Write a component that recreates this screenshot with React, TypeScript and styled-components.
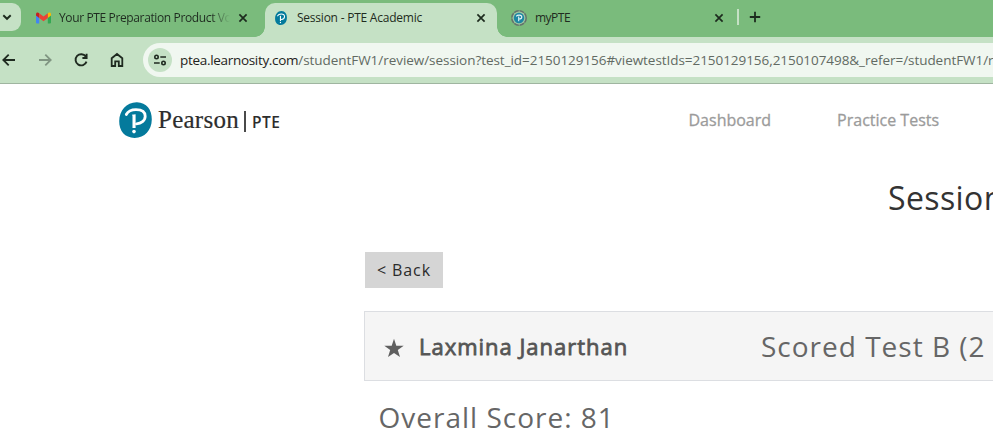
import React from "react";
import styled, { createGlobalStyle } from "styled-components";

const GlobalStyle = createGlobalStyle`
  * { box-sizing: border-box; }
  html, body { margin: 0; padding: 0; overflow: hidden; background: #fff; }
  svg { display: block; flex: none; }
`;

const Screen = styled.div`
  width: 993px;
  height: 446px;
  overflow: hidden;
  background: #fff;
  font-family: "Open Sans", "Noto Sans", sans-serif;
`;

const TabStrip = styled.div`
  display: flex;
  height: 37px;
  background: #7abb7c;
`;

const TabSearch = styled.div`
  display: flex;
  align-items: center;
  width: 21px;
  height: 28px;
  margin-top: 3px;
  padding-left: 2px;
  border-radius: 0 9px 9px 0;
  background: #c5e1c5;
`;

const Tab = styled.div<{ $width: number; $left: number; $right: number; $active?: boolean }>`
  position: relative;
  display: flex;
  align-items: center;
  flex: none;
  width: ${(p) => p.$width}px;
  height: 34px;
  margin-top: 3px;
  padding: 0 ${(p) => p.$right}px 5px ${(p) => p.$left}px;
  border-radius: 10px 10px 0 0;
  background: ${(p) => (p.$active ? "#c5e1c5" : "transparent")};

  &::before,
  &::after {
    content: ${(p) => (p.$active ? '""' : "none")};
    position: absolute;
    bottom: 0;
    width: 10px;
    height: 10px;
  }
  &::before {
    left: -10px;
    background: radial-gradient(circle at 0 0, transparent 9.5px, #c5e1c5 10px);
  }
  &::after {
    right: -10px;
    background: radial-gradient(circle at 100% 0, transparent 9.5px, #c5e1c5 10px);
  }
`;

const TabTitle = styled.span<{ $gap: number; $spacing: number; $fade?: boolean }>`
  flex: 1;
  margin-left: ${(p) => p.$gap}px;
  overflow: hidden;
  white-space: nowrap;
  font-size: 12px;
  line-height: 18px;
  letter-spacing: ${(p) => p.$spacing}px;
  color: #1f2b20;
  mask-image: ${(p) =>
    p.$fade ? "linear-gradient(to right, #000 152px, transparent 171px)" : "none"};
`;

const NewTab = styled.div`
  display: flex;
  align-items: center;
  gap: 10px;
  height: 34px;
`;

const TabDivider = styled.div`
  width: 2px;
  height: 16px;
  background: #c5e1c5;
`;

const Toolbar = styled.div`
  display: flex;
  align-items: center;
  height: 47px;
  border-bottom: 1px solid #9fb5a0;
  background: #c5e1c5;
`;

const NavIcons = styled.div`
  display: flex;
  align-items: center;
  gap: 16px;
  width: 143px;
  flex: none;
  margin-left: -1px;
`;

const AddressBar = styled.div`
  display: flex;
  align-items: center;
  width: 900px;
  flex: none;
  height: 34px;
  padding-left: 5px;
  margin-left: 1px;
  border-radius: 17px;
  background: #f0f7f0;
`;

const SiteInfo = styled.div`
  display: flex;
  align-items: center;
  justify-content: center;
  width: 24px;
  height: 24px;
  border-radius: 50%;
  background: #c5e1c5;
`;

const Url = styled.span`
  margin-left: 8px;
  white-space: nowrap;
  font-size: 13.5px;
  line-height: 20px;
  letter-spacing: -0.05px;
  color: #626a63;
`;

const Host = styled.span`
  letter-spacing: -0.31px;
  color: #1f2320;
`;

const SiteHeader = styled.header`
  display: flex;
  align-items: center;
  height: 72px;
  padding-left: 119px;
`;

const Brand = styled.div`
  display: flex;
  align-items: center;
  width: 569.5px;
  color: #2d2d2d;
`;

const BrandName = styled.span`
  width: 82px;
  margin-left: 6px;
  font-family: "Liberation Serif", serif;
  font-size: 25px;
  line-height: 30px;
  letter-spacing: 0.25px;
  -webkit-text-stroke: 0.2px #2d2d2d;
`;

const BrandRule = styled.div`
  width: 2px;
  height: 21px;
  margin: 2px 6px 0 4px;
  background: #4a4a4a;
`;

const BrandProduct = styled.span`
  padding-top: 3px;
  font-size: 15.5px;
  font-weight: 600;
  line-height: 20px;
  letter-spacing: 0.5px;
`;

const SiteNav = styled.nav`
  display: flex;
  gap: 66px;
`;

const NavLink = styled.a`
  white-space: nowrap;
  font-size: 16px;
  line-height: 22px;
  color: #9b9b9b;
  -webkit-text-stroke: 0.3px #9b9b9b;
`;

const PageTitle = styled.h1`
  margin: 18px 0 0 888px;
  height: 48px;
  white-space: nowrap;
  font-size: 32px;
  font-weight: 400;
  line-height: 48px;
  letter-spacing: 0.4px;
  color: #333;
`;

const Content = styled.main`
  padding: 30px 0 0 364px;
`;

const BackButton = styled.button`
  display: block;
  width: 78px;
  height: 36px;
  margin-left: 1px;
  padding: 0;
  border: 0;
  background: #d5d5d5;
  font-family: inherit;
  font-size: 16px;
  line-height: 36px;
  letter-spacing: 0.9px;
  color: #2b2b2b;
  white-space: nowrap;
`;

const StudentBar = styled.section`
  display: flex;
  align-items: center;
  width: 700px;
  height: 70px;
  margin-top: 23px;
  padding-left: 19px;
  border: 1px solid #dcdee2;
  background: #f5f5f5;
`;

const StarSlot = styled.div`
  padding-top: 4px;
`;

const StudentName = styled.span`
  width: 342px;
  margin-left: 15px;
  font-size: 22px;
  line-height: 32px;
  letter-spacing: 0.98px;
  color: #555;
  -webkit-text-stroke: 0.8px #555;
  white-space: nowrap;
`;

const TestName = styled.span`
  font-size: 28px;
  line-height: 40px;
  letter-spacing: 1px;
  color: #666;
  white-space: nowrap;
`;

const OverallScore = styled.div`
  margin: 16px 0 0 14.5px;
  font-size: 28px;
  line-height: 40px;
  letter-spacing: 1px;
  color: #666;
  white-space: nowrap;
`;

const PearsonMark = ({ width, height }: { width: number; height: number }) => (
  <svg width={width} height={height} viewBox="0 0 33 36" preserveAspectRatio="none">
    <path
      d="M18 .2C27.500 .4 33 7.500 32.800 17.500C32.600 28.500 25.500 36 15.500 35.900C6 35.800 0 29 .2 19C.4 8.500 7.500 0 18 .2Z"
      fill="#047a9c"
    />
    <path
      d="M7.300 12.500C9 9.200 12.500 7.600 17 7.600C22.700 7.600 26.200 10 26.200 14.200C26.200 18.700 22 21.600 17.500 21.900"
      fill="none"
      stroke="#fff"
      strokeWidth="2.800"
      strokeLinecap="round"
    />
    <path d="M12.800 12.700L16.600 12.200V26H13.500V13.800Z" fill="#fff" />
    <circle cx="15" cy="29.600" r="1.800" fill="#fff" />
  </svg>
);

const BadgeMark = () => (
  <svg width="16" height="16" viewBox="0 0 16 16">
    <circle cx="8" cy="8" r="7.200" fill="#9cc7a2" stroke="#65716c" strokeWidth="1.500" strokeDasharray="5 .7" />
    <circle cx="8" cy="8" r="5.200" fill="#1d87a2" />
    <path d="M5.200 6.300C6.500 4.700 10.800 4.600 10.800 7C10.800 8.500 9.300 9 8.200 9M7.700 6.500V11.300" fill="none" stroke="#e8f4f6" strokeWidth="1.100" />
  </svg>
);

const GmailMark = () => (
  <svg width="15" height="12" viewBox="0 0 15 12">
    <path d="M0 2H3.200V11.500H1.200Q0 11.500 0 10.400Z" fill="#4285f4" />
    <path d="M11.800 2H15V10.400Q15 11.500 13.800 11.500H11.800Z" fill="#34a853" />
    <path d="M11.800 1.200C13.200 -.2 15 .5 15 2.200V3.600L11.800 6Z" fill="#fbbc04" />
    <path d="M3.200 1.200C1.800 -.2 0 .5 0 2.200V3.600L3.200 6Z" fill="#c5221f" />
    <path d="M3.200 1.200L7.500 4.600L11.800 1.200V6L7.500 9.200L3.200 6Z" fill="#ea4335" />
  </svg>
);

const CloseIcon = () => (
  <svg width="10" height="10" viewBox="0 0 10 10" stroke="#1d2b1e" strokeWidth="1.700">
    <path d="M1.400 1.400L8.600 8.600M8.600 1.400L1.400 8.600" />
  </svg>
);

const ArrowIcon = ({ color, forward }: { color: string; forward?: boolean }) => (
  <svg width="20" height="20" viewBox="0 0 20 20" fill="none" stroke={color} strokeWidth="1.800">
    <path d={forward ? "M4 10H15.500M10.300 4.600L15.700 10L10.300 15.400" : "M16 10H4.500M9.700 4.600L4.300 10L9.700 15.400"} />
  </svg>
);

export default function App() {
  return (
    <Screen>
      <GlobalStyle />
      <TabStrip>
        <TabSearch>
          <svg width="10" height="10" viewBox="0 0 10 10" fill="none" stroke="#1d2b1e" strokeWidth="1.900">
            <path d="M1.300 3.200L5 6.800L8.700 3.200" />
          </svg>
        </TabSearch>
        <Tab $width={244} $left={14.5} $right={17}>
          <GmailMark />
          <TabTitle $gap={8.5} $spacing={-0.37} $fade>Your PTE Preparation Product Voucher</TabTitle>
          <CloseIcon />
        </Tab>
        <Tab $width={232} $left={10} $right={11} $active>
          <PearsonMark width={12} height={14} />
          <TabTitle $gap={10} $spacing={-0.23}>Session - PTE Academic</TabTitle>
          <CloseIcon />
        </Tab>
        <Tab $width={240} $left={14} $right={13}>
          <BadgeMark />
          <TabTitle $gap={8} $spacing={-0.5}>myPTE</TabTitle>
          <CloseIcon />
        </Tab>
        <NewTab>
          <TabDivider />
          <svg width="12" height="12" viewBox="0 0 12 12" stroke="#1d2b1e" strokeWidth="1.800">
            <path d="M6 .8V11.200M.8 6H11.200" />
          </svg>
        </NewTab>
      </TabStrip>
      <Toolbar>
        <NavIcons>
          <ArrowIcon color="#1f2a20" />
          <ArrowIcon color="#809582" forward />
          <svg width="20" height="20" viewBox="0 0 20 20" fill="none" stroke="#1f2a20" strokeWidth="1.900">
            <path d="M14.800 6.600A5.600 5.600 0 1 0 15.500 11.600M15.600 3.800V8H11.400" />
          </svg>
          <svg width="20" height="20" viewBox="0 0 20 20" fill="none" stroke="#1f2a20" strokeWidth="1.800">
            <path d="M4.700 8.200L10 4L15.300 8.200V16H11.800V11.300H8.200V16H4.700Z" />
          </svg>
        </NavIcons>
        <AddressBar>
          <SiteInfo>
            <svg width="14" height="12" viewBox="0 0 14 12" fill="none" stroke="#1f2a20" strokeWidth="1.600">
              <circle cx="3.500" cy="3" r="1.700" />
              <path d="M7.300 3H13M1 9H6.700" />
              <circle cx="10.500" cy="9" r="1.700" />
            </svg>
          </SiteInfo>
          <Url>
            <Host>ptea.learnosity.com</Host>
            /studentFW1/review/session?test_id=2150129156#viewtestIds=2150129156,2150107498&amp;_refer=/studentFW1/review
          </Url>
        </AddressBar>
      </Toolbar>
      <SiteHeader>
        <Brand>
          <PearsonMark width={33} height={36} />
          <BrandName>Pearson</BrandName>
          <BrandRule />
          <BrandProduct>PTE</BrandProduct>
        </Brand>
        <SiteNav>
          <NavLink>Dashboard</NavLink>
          <NavLink>Practice Tests</NavLink>
        </SiteNav>
      </SiteHeader>
      <PageTitle>Session</PageTitle>
      <Content>
        <BackButton>&lt; Back</BackButton>
        <StudentBar>
          <StarSlot>
            <svg width="20" height="20" viewBox="0 0 20 20" fill="#5f5f5f">
              <path d="M10 .8L12.300 7.700L19.700 7.800L13.800 12.100L16 19L10 14.900L4 19L6.200 12.100L.3 7.800L7.700 7.700Z" />
            </svg>
          </StarSlot>
          <StudentName>Laxmina Janarthan</StudentName>
          <TestName>Scored Test B (2</TestName>
        </StudentBar>
        <OverallScore>Overall Score: 81</OverallScore>
      </Content>
    </Screen>
  );
}
